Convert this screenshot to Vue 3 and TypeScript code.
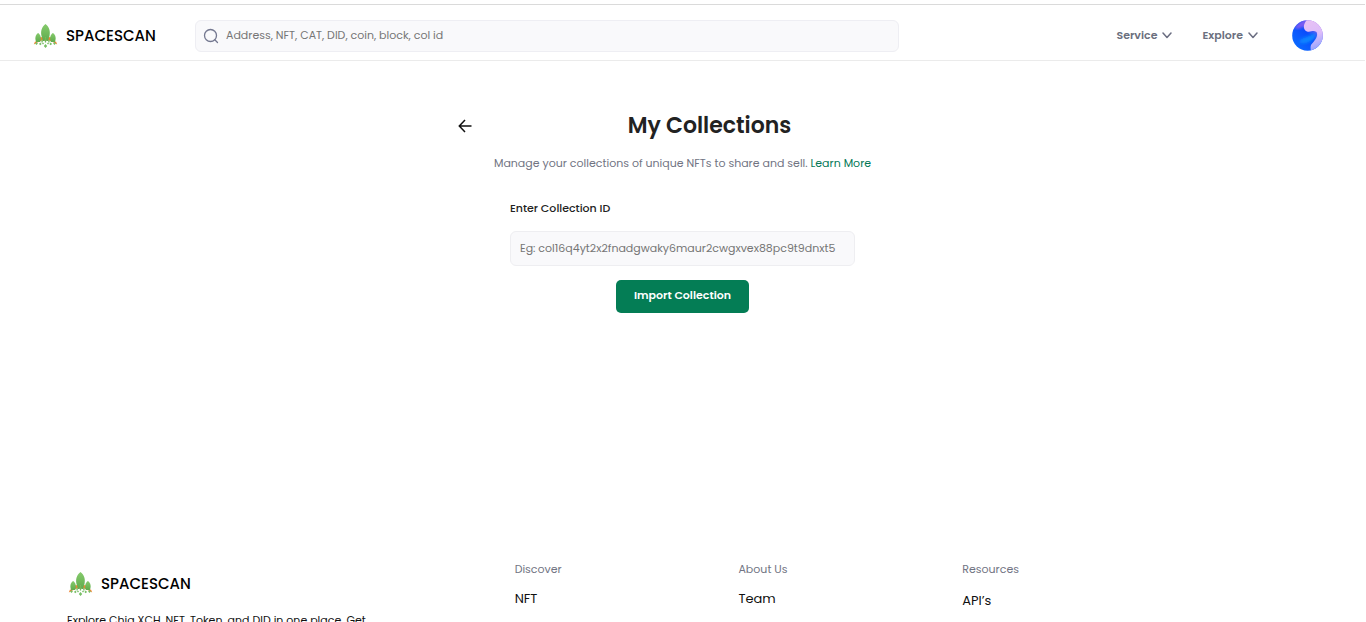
<script setup lang="ts">
import { ref } from 'vue'

interface FooterColumn {
  title: string
  links: string[]
  spaced?: boolean
}

const query = ref('')
const collectionId = ref('')
const menus: string[] = ['Service', 'Explore']
const columns: FooterColumn[] = [
  { title: 'Discover', links: ['NFT'] },
  { title: 'About Us', links: ['Team'] },
  { title: 'Resources', links: ['API’s'], spaced: true },
]
</script>

<template>
  <svg class="defs" width="0" height="0" aria-hidden="true">
    <defs>
      <linearGradient id="leaf" x1="0" y1="0" x2="0" y2="1">
        <stop offset="0" stop-color="#86cb6c" />
        <stop offset="1" stop-color="#5fab4d" />
      </linearGradient>
      <symbol id="rocket" viewBox="0 0 24 24">
        <path d="M0.300 20.500 1.500 17.500 4 18 7 13 10 13.500 14 13.500 17 13 20 18 22.500 17.500 23.700 20.500 21 19 16 16.500 8 16.500 3 19Z" fill="#ef8432" />
        <path d="M12 0C8 3 7 7.500 8 12L9.600 17h1.500l0.900-4 0.900 4h1.500L16 12C17 7.500 16 3 12 0Z" fill="url(#leaf)" />
        <path d="M4.600 9C1.700 11 1.200 14.400 2.600 18h4C8 14.400 7.500 11 4.600 9Z" fill="url(#leaf)" />
        <path d="M19.400 9c-2.900 2-3.400 5.400-2 9h4C22.800 14.400 22.300 11 19.400 9Z" fill="url(#leaf)" />
        <path d="M12 13.500v5M8.600 15.500v3M15.400 15.500v3" stroke="#71b85c" stroke-width="1.300" />
        <path d="m3 18 1.400 1.500L3 21l-1.400-1.500zM6.800 18.500l1.300 1.400-1.300 1.400-1.300-1.400zM12 20l1.700 2L12 24l-1.700-2zM17.200 18.500l1.300 1.400-1.300 1.400-1.300-1.400zM21 18l1.400 1.500L21 21l-1.400-1.500zM9.500 18.500l1 1-1 1-1-1zM14.500 18.500l1 1-1 1-1-1z" fill="#78bf66" />
      </symbol>
    </defs>
  </svg>

  <div class="page">
    <header class="header">
      <a class="brand" href="#">
        <svg class="logo" aria-hidden="true"><use href="#rocket" /></svg>
        <span>SPACESCAN</span>
      </a>
      <label class="search">
        <svg width="16" height="16" viewBox="0 0 16 16" fill="none" stroke="#747890" stroke-width="1.300" stroke-linecap="round" aria-hidden="true">
          <circle cx="7.500" cy="7.500" r="6" />
          <path d="m11.800 11.800 2.700 2.700" />
        </svg>
        <input v-model="query" type="text" aria-label="Search" placeholder="Address, NFT, CAT, DID, coin, block, col id" />
      </label>
      <nav class="nav">
        <button v-for="menu in menus" :key="menu" type="button" class="menu">
          {{ menu }}
          <svg width="10" height="7" viewBox="0 0 10 7" fill="none" stroke="#6b6e82" stroke-width="1.500" stroke-linecap="round" stroke-linejoin="round" aria-hidden="true">
            <path d="m1 1 4 4.500L9 1" />
          </svg>
        </button>
        <button type="button" class="avatar" aria-label="Account">
          <svg width="31" height="31" viewBox="0 0 31 31" aria-hidden="true">
            <defs>
              <clipPath id="disc"><circle cx="15.500" cy="15.500" r="15.300" /></clipPath>
              <linearGradient id="sky" x1="0.100" y1="0.800" x2="0.800" y2="0.100">
                <stop offset="0" stop-color="#0a68ff" />
                <stop offset="0.550" stop-color="#0a4cfb" />
                <stop offset="1" stop-color="#a070ee" />
              </linearGradient>
              <linearGradient id="pink" x1="0.400" y1="0" x2="0.700" y2="1">
                <stop offset="0" stop-color="#e8c2f4" />
                <stop offset="0.500" stop-color="#dcbcfa" />
                <stop offset="1" stop-color="#7b9bff" />
              </linearGradient>
              <filter id="soft"><feGaussianBlur stdDeviation="0.600" /></filter>
              <filter id="softer"><feGaussianBlur stdDeviation="1.500" /></filter>
            </defs>
            <g clip-path="url(#disc)">
              <rect width="31" height="31" fill="url(#sky)" />
              <path d="M2 8Q8 0 17 0L13 6 6 9Z" fill="#805cf2" filter="url(#softer)" />
              <path d="M14 1C11 5 11 10 15 11.500C19 12.500 21 9.500 24.500 12C27 17 21 22 19 25C18 28 19 30 19 33H34V-3H17Z" fill="url(#pink)" filter="url(#soft)" />
              <path d="M8 20C12 17 18 16 23 13C25 17 20 22 14 23C10 24 6 23 8 20Z" fill="#0886ff" filter="url(#softer)" />
            </g>
          </svg>
        </button>
      </nav>
    </header>

    <main class="main">
      <div class="title-row">
        <button type="button" class="back" aria-label="Back">
          <svg width="14" height="14" viewBox="0 0 14 14" fill="none" stroke="#111" stroke-width="1.500" aria-hidden="true">
            <path d="M13.500 7H1.500M7 1 1.300 7 7 13" />
          </svg>
        </button>
        <h1>My Collections</h1>
      </div>
      <p class="intro">Manage your collections of unique NFTs to share and sell. <a href="#">Learn More</a></p>
      <form class="form" @submit.prevent>
        <label for="collection">Enter Collection ID</label>
        <input id="collection" v-model="collectionId" type="text" placeholder="Eg: col16q4yt2x2fnadgwaky6maur2cwgxvex88pc9t9dnxt5" />
        <button type="submit">Import Collection</button>
      </form>
    </main>

    <footer class="footer">
      <section>
        <a class="brand" href="#">
          <svg class="logo" aria-hidden="true"><use href="#rocket" /></svg>
          <span>SPACESCAN</span>
        </a>
        <p>Explore Chia XCH, NFT, Token, and DID in one place. Get</p>
      </section>
      <section v-for="column in columns" :key="column.title" :class="{ spaced: column.spaced }">
        <h2>{{ column.title }}</h2>
        <a v-for="link in column.links" :key="link" href="#">{{ link }}</a>
      </section>
    </footer>
  </div>
</template>

<style>
body {
  margin: 0;
  background: #fff;
}
</style>

<style scoped>
.defs {
  position: absolute;
}

.page {
  display: flex;
  flex-direction: column;
  box-sizing: border-box;
  height: 100vh;
  overflow: hidden;
  padding: 4px 1px 0 0;
  font-family: Poppins, Inter, "Open Sans", sans-serif;
  font-size: 11px;
  color: #222;
}

a {
  color: inherit;
  text-decoration: none;
}

button,
input {
  font: inherit;
  color: inherit;
}

button {
  border: 0;
  padding: 0;
  background: none;
  cursor: pointer;
}

.header {
  display: flex;
  align-items: center;
  flex: none;
  box-sizing: border-box;
  height: 57px;
  padding: 6px 42px 0 33px;
  border-top: 1px solid #dadada;
  border-bottom: 1px solid #ebebeb;
}

.brand {
  display: flex;
  align-items: center;
  gap: 8px;
  font-size: 15px;
  line-height: 24px;
  font-weight: 500;
  color: #000;
}

.logo {
  width: 25px;
  height: 24px;
}

.header .brand {
  width: 162px;
}

.search {
  display: flex;
  align-items: center;
  gap: 7px;
  box-sizing: border-box;
  flex: 0 1 704px;
  height: 32px;
  padding: 0 7px;
  border: 1px solid #eeeef3;
  border-radius: 6px;
  background: #f9f9fb;
}

.search input {
  flex: 1;
  min-width: 0;
  padding: 0;
  border: 0;
  outline: 0;
  background: none;
}

input::placeholder {
  color: #757575;
  opacity: 1;
}

.nav {
  display: flex;
  align-items: center;
  gap: 30px;
  margin-left: auto;
  color: #6b6f7e;
}

.menu {
  display: flex;
  align-items: center;
  gap: 5px;
  font-weight: 600;
}

.avatar {
  display: flex;
  margin-left: 4px;
}

.main {
  display: flex;
  flex-direction: column;
  align-items: center;
  flex: 1 0 auto;
  padding-top: 47px;
}

.title-row {
  display: flex;
  align-items: center;
  width: 450px;
}

.back {
  display: flex;
  width: 54px;
}

h1 {
  flex: 1;
  margin: 0;
  font-size: 22px;
  line-height: 36px;
  font-weight: 600;
  text-align: center;
}

.intro {
  margin: 9px 0 0;
  line-height: 20px;
  color: #717483;
}

.intro a {
  color: #047857;
}

.form {
  display: flex;
  flex-direction: column;
  align-items: center;
  width: 345px;
  margin-top: 25px;
}

.form label {
  align-self: flex-start;
  line-height: 20px;
  font-weight: 500;
}

.form input {
  box-sizing: border-box;
  width: 100%;
  height: 35px;
  margin-top: 13px;
  padding: 0 9px;
  border: 1px solid #eeeef1;
  border-radius: 6px;
  background: #f9f9fb;
}

.form button {
  width: 133px;
  height: 33px;
  margin-top: 14px;
  padding-bottom: 2px;
  border-radius: 5px;
  background: #047d55;
  font-weight: 600;
  color: #fff;
}

.footer {
  display: grid;
  grid-template-columns: 4fr 2fr 2fr 3fr;
  flex: none;
  height: 63px;
  padding: 0 67px;
}

.footer .brand {
  padding: 13px 0 0 1px;
}

.footer p {
  margin: 14px 0 0;
  line-height: 20px;
  white-space: nowrap;
  color: #111;
}

.footer h2 {
  margin: 0 0 10px;
  font-size: 11px;
  line-height: 20px;
  font-weight: 400;
  color: #717483;
}

.footer section > a:not(.brand) {
  display: block;
  font-size: 13px;
  line-height: 20px;
  color: #111;
}

.footer .spaced h2 {
  margin-bottom: 12px;
}
</style>
